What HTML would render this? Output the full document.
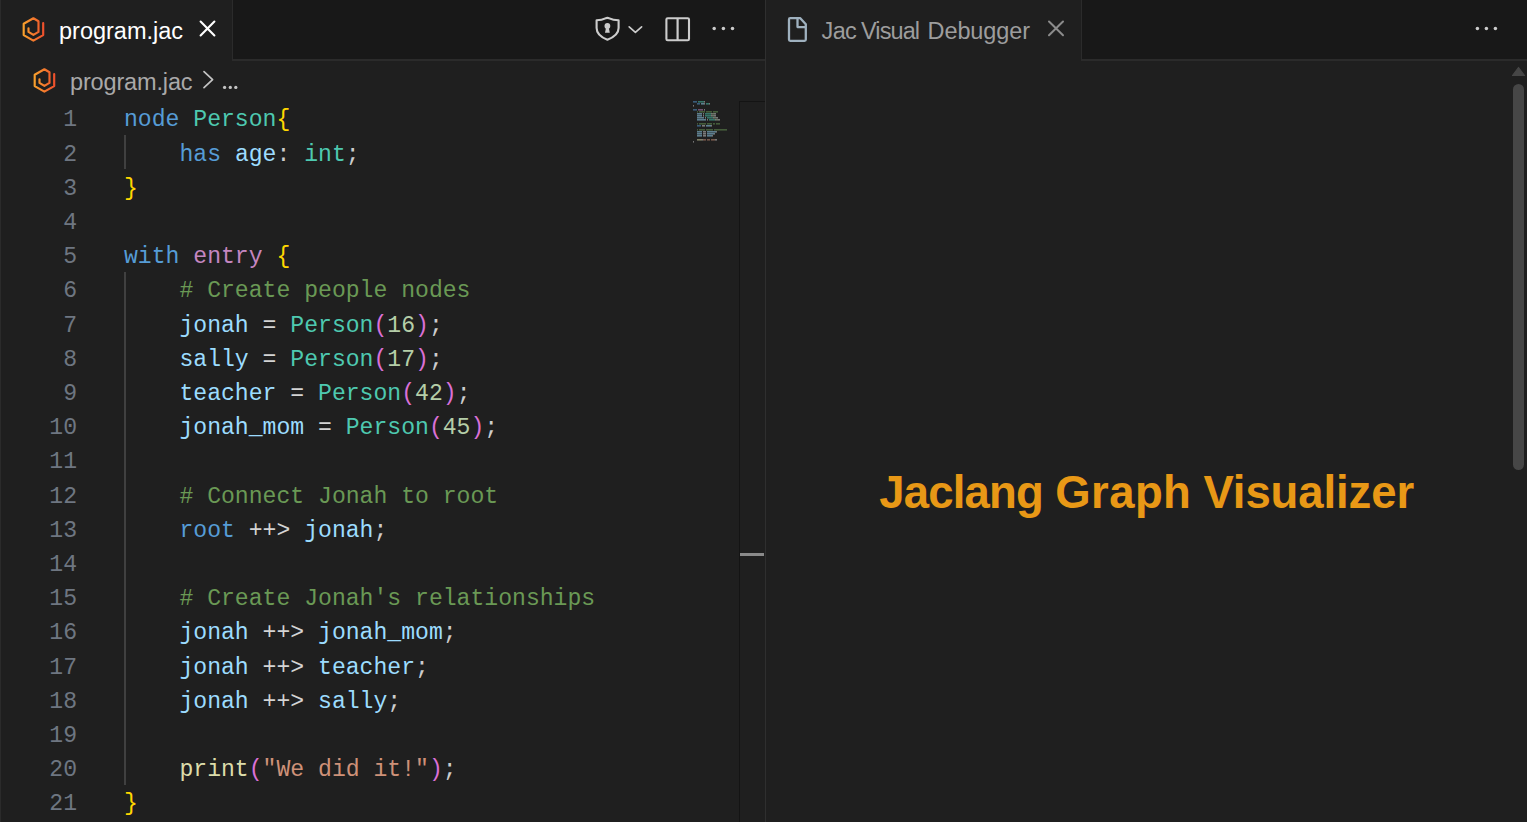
<!DOCTYPE html>
<html><head><meta charset="utf-8"><style>
*{margin:0;padding:0;box-sizing:border-box}
html,body{width:1527px;height:822px;overflow:hidden;background:#1f1f1f;font-family:"Liberation Sans",sans-serif}
.abs{position:absolute}
.tabt{position:absolute;font-size:23.5px;line-height:28px;white-space:nowrap}
.ln{position:absolute;left:0;width:77px;text-align:right;font-family:"Liberation Mono",monospace;font-size:23.1px;color:#6e7681;height:34.2px;line-height:34.2px}
.cl{position:absolute;left:124px;font-family:"Liberation Mono",monospace;font-size:23.1px;color:#cccccc;height:34.2px;line-height:34.2px;white-space:pre}
.k{color:#569cd6}.t{color:#4ec9b0}.v{color:#9cdcfe}.c{color:#6a9955}.s{color:#ce9178}.f{color:#dcdcaa}.n{color:#b5cea8}.b1{color:#ffd700}.b2{color:#da70d6}.ck{color:#c586c0}.o{color:#d4d4d4}
.ig{position:absolute;left:124px;width:2px;background:#404040}
.ttl{position:absolute;top:468px;font-weight:bold;font-size:45.5px;line-height:50px;color:#e89816;white-space:nowrap}
</style></head><body>
<div class="abs" style="left:0px;top:0px;width:1px;height:822px;background:#2b2b2b"></div>
<div class="abs" style="left:1px;top:0px;width:764px;height:59px;background:#181818"></div>
<div class="abs" style="left:1px;top:59px;width:764px;height:2px;background:#2b2b2b"></div>
<div class="abs" style="left:1px;top:0px;width:231px;height:61px;background:#1f1f1f"></div>
<div class="abs" style="left:232px;top:0px;width:1px;height:59px;background:#2b2b2b"></div>
<div class="abs" style="left:766px;top:0px;width:761px;height:59px;background:#181818"></div>
<div class="abs" style="left:766px;top:59px;width:761px;height:2px;background:#2b2b2b"></div>
<div class="abs" style="left:766px;top:0px;width:315px;height:61px;background:#1f1f1f"></div>
<div class="abs" style="left:1081px;top:0px;width:1px;height:59px;background:#2b2b2b"></div>
<div class="abs" style="left:765px;top:0px;width:1px;height:822px;background:#2f2f2f"></div>
<div class="abs" style="left:739px;top:101px;width:1px;height:721px;background:#141414"></div>
<div class="abs" style="left:740px;top:101px;width:25px;height:1px;background:#141414"></div>
<div class="abs" style="left:740px;top:553px;width:24px;height:3px;background:#8a8a8a"></div>
<svg class="abs" style="left:0px;top:0px" width="60" height="60" viewBox="0 0 60 60"><defs><linearGradient id="g1" x1="22" y1="0" x2="45" y2="0" gradientUnits="userSpaceOnUse"><stop offset="0" stop-color="#f9a52c"/><stop offset="0.5" stop-color="#f47a2d"/><stop offset="1" stop-color="#ee4a2c"/></linearGradient></defs><path d="M28.5,28.2 L28.5,31.9 L33.4,34.9 L38.5,31.9 L38.5,21.2 L33.4,18.3 L23.7,23.8 L23.7,35.1 L33.4,40.6 L43.2,35.1 L43.2,23" fill="none" stroke="url(#g1)" stroke-width="2.15" stroke-linecap="round" stroke-linejoin="round"/></svg>
<svg class="abs" style="left:11.4px;top:51px" width="60" height="60" viewBox="0 0 60 60"><defs><linearGradient id="g2" x1="22" y1="0" x2="45" y2="0" gradientUnits="userSpaceOnUse"><stop offset="0" stop-color="#f9a52c"/><stop offset="0.5" stop-color="#f47a2d"/><stop offset="1" stop-color="#ee4a2c"/></linearGradient></defs><path d="M28.5,28.2 L28.5,31.9 L33.4,34.9 L38.5,31.9 L38.5,21.2 L33.4,18.3 L23.7,23.8 L23.7,35.1 L33.4,40.6 L43.2,35.1 L43.2,23" fill="none" stroke="url(#g2)" stroke-width="2.15" stroke-linecap="round" stroke-linejoin="round"/></svg>
<div class="tabt" style="left:59px;top:17.2px;color:#ffffff">program.jac</div>
<svg class="abs" style="left:0;top:0" width="240" height="60"><path d="M200.6,21.6 L214.4,35.4 M214.4,21.6 L200.6,35.4" stroke="#ffffff" stroke-width="2.1" stroke-linecap="round"/></svg>
<div class="tabt" style="left:70px;top:67.8px;color:#a9a9a9;letter-spacing:-0.15px">program.jac</div>
<svg class="abs" style="left:0;top:60px" width="260" height="40"><path d="M204,11.6 L212.6,19.6 L204,27.6" fill="none" stroke="#c4c4c4" stroke-width="1.7" stroke-linecap="round" stroke-linejoin="round"/><circle cx="224.6" cy="27.4" r="1.65" fill="#c4c4c4"/><circle cx="230.3" cy="27.4" r="1.65" fill="#c4c4c4"/><circle cx="235.8" cy="27.4" r="1.65" fill="#c4c4c4"/></svg>
<svg class="abs" style="left:580px;top:0" width="180" height="60" viewBox="580 0 180 60"><path d="M596.6,20.3 Q602,20.3 605.4,18.4 Q607.4,17.3 609.4,18.4 Q612.8,20.3 618.6,20.3 L618.6,28 C618.6,33.5 613.5,37.4 607.4,39.7 C601.3,37.4 596.6,33.5 596.6,28 Z" fill="none" stroke="#cccccc" stroke-width="2.1" stroke-linejoin="round"/><circle cx="607.4" cy="25.9" r="2.9" fill="#cccccc"/><path d="M606.1,27.5 L608.7,27.5 L609.8,32.8 L605,32.8 Z" fill="#cccccc"/><path d="M629.2,26.9 L635.4,32.4 L641.6,26.9" fill="none" stroke="#cccccc" stroke-width="1.7" stroke-linecap="round" stroke-linejoin="round"/><rect x="666.4" y="18.2" width="22.6" height="22" rx="1.3" fill="none" stroke="#cccccc" stroke-width="2.1"/><path d="M677.6,18.2 L677.6,40.2" stroke="#cccccc" stroke-width="2.2"/><circle cx="714.2" cy="28.6" r="1.75" fill="#cccccc"/><circle cx="723.4" cy="28.6" r="1.75" fill="#cccccc"/><circle cx="732.5" cy="28.6" r="1.75" fill="#cccccc"/></svg>
<svg class="abs" style="left:780px;top:0" width="60" height="60" viewBox="780 0 60 60"><path d="M800.3,18.2 L790.2,18.2 Q789,18.2 789,19.4 L789,39.6 Q789,40.8 790.2,40.8 L804.6,40.8 Q805.8,40.8 805.8,39.6 L805.8,24.2 Z" fill="none" stroke="#9fb1bf" stroke-width="2.3" stroke-linejoin="round"/><path d="M797.5,18.2 L797.5,27.1 L805.8,27.1" fill="none" stroke="#9fb1bf" stroke-width="2.3" stroke-linejoin="round"/></svg>
<div class="tabt" style="left:821.5px;top:17.2px;color:#9d9d9d;letter-spacing:-0.6px">Jac</div>
<div class="tabt" style="left:861px;top:17.2px;color:#9d9d9d;letter-spacing:-0.9px">Visual</div>
<div class="tabt" style="left:927.6px;top:17.2px;color:#9d9d9d;letter-spacing:-0.12px">Debugger</div>
<svg class="abs" style="left:1030px;top:0" width="60" height="60" viewBox="1030 0 60 60"><path d="M1049,21.5 L1063,35.2 M1063,21.5 L1049,35.2" stroke="#8b8b8b" stroke-width="2" stroke-linecap="round"/></svg>
<svg class="abs" style="left:1460px;top:0" width="60" height="60" viewBox="1460 0 60 60"><circle cx="1477.4" cy="28.5" r="1.75" fill="#cccccc"/><circle cx="1486.4" cy="28.5" r="1.75" fill="#cccccc"/><circle cx="1495.4" cy="28.5" r="1.75" fill="#cccccc"/></svg>
<svg class="abs" style="left:1500px;top:60px" width="27" height="420" viewBox="1500 60 27 420"><path d="M1518.5,67.5 L1524.5,75.5 L1512.5,75.5 Z" fill="#464646" stroke="#464646" stroke-width="1.2" stroke-linejoin="round"/><rect x="1513" y="84" width="11" height="386" rx="5.5" fill="#464646"/></svg>
<svg class="abs" style="left:0;top:0" width="760" height="160" opacity="0.5"><rect x="693" y="101" width="4" height="1.6" fill="#569cd6"/><rect x="698" y="101" width="6" height="1.6" fill="#4ec9b0"/><rect x="704" y="101" width="1" height="1.6" fill="#cccccc"/><rect x="697" y="103" width="3" height="1.6" fill="#569cd6"/><rect x="701" y="103" width="3" height="1.6" fill="#9cdcfe"/><rect x="704" y="103" width="1" height="1.6" fill="#cccccc"/><rect x="706" y="103" width="3" height="1.6" fill="#4ec9b0"/><rect x="709" y="103" width="1" height="1.6" fill="#cccccc"/><rect x="693" y="105" width="1" height="1.6" fill="#cccccc"/><rect x="693" y="109" width="4" height="1.6" fill="#569cd6"/><rect x="698" y="109" width="5" height="1.6" fill="#c586c0"/><rect x="704" y="109" width="1" height="1.6" fill="#cccccc"/><rect x="697" y="111" width="1" height="1.6" fill="#6a9955"/><rect x="699" y="111" width="6" height="1.6" fill="#6a9955"/><rect x="706" y="111" width="6" height="1.6" fill="#6a9955"/><rect x="713" y="111" width="5" height="1.6" fill="#6a9955"/><rect x="697" y="113" width="5" height="1.6" fill="#9cdcfe"/><rect x="703" y="113" width="1" height="1.6" fill="#d4d4d4"/><rect x="705" y="113" width="6" height="1.6" fill="#4ec9b0"/><rect x="711" y="113" width="1" height="1.6" fill="#cccccc"/><rect x="712" y="113" width="2" height="1.6" fill="#b5cea8"/><rect x="714" y="113" width="1" height="1.6" fill="#cccccc"/><rect x="715" y="113" width="1" height="1.6" fill="#cccccc"/><rect x="697" y="115" width="5" height="1.6" fill="#9cdcfe"/><rect x="703" y="115" width="1" height="1.6" fill="#d4d4d4"/><rect x="705" y="115" width="6" height="1.6" fill="#4ec9b0"/><rect x="711" y="115" width="1" height="1.6" fill="#cccccc"/><rect x="712" y="115" width="2" height="1.6" fill="#b5cea8"/><rect x="714" y="115" width="1" height="1.6" fill="#cccccc"/><rect x="715" y="115" width="1" height="1.6" fill="#cccccc"/><rect x="697" y="117" width="7" height="1.6" fill="#9cdcfe"/><rect x="705" y="117" width="1" height="1.6" fill="#d4d4d4"/><rect x="707" y="117" width="6" height="1.6" fill="#4ec9b0"/><rect x="713" y="117" width="1" height="1.6" fill="#cccccc"/><rect x="714" y="117" width="2" height="1.6" fill="#b5cea8"/><rect x="716" y="117" width="1" height="1.6" fill="#cccccc"/><rect x="717" y="117" width="1" height="1.6" fill="#cccccc"/><rect x="697" y="119" width="9" height="1.6" fill="#9cdcfe"/><rect x="707" y="119" width="1" height="1.6" fill="#d4d4d4"/><rect x="709" y="119" width="6" height="1.6" fill="#4ec9b0"/><rect x="715" y="119" width="1" height="1.6" fill="#cccccc"/><rect x="716" y="119" width="2" height="1.6" fill="#b5cea8"/><rect x="718" y="119" width="1" height="1.6" fill="#cccccc"/><rect x="719" y="119" width="1" height="1.6" fill="#cccccc"/><rect x="697" y="123" width="1" height="1.6" fill="#6a9955"/><rect x="699" y="123" width="7" height="1.6" fill="#6a9955"/><rect x="707" y="123" width="5" height="1.6" fill="#6a9955"/><rect x="713" y="123" width="2" height="1.6" fill="#6a9955"/><rect x="716" y="123" width="4" height="1.6" fill="#6a9955"/><rect x="697" y="125" width="4" height="1.6" fill="#569cd6"/><rect x="702" y="125" width="3" height="1.6" fill="#d4d4d4"/><rect x="706" y="125" width="5" height="1.6" fill="#9cdcfe"/><rect x="711" y="125" width="1" height="1.6" fill="#cccccc"/><rect x="697" y="129" width="1" height="1.6" fill="#6a9955"/><rect x="699" y="129" width="6" height="1.6" fill="#6a9955"/><rect x="706" y="129" width="7" height="1.6" fill="#6a9955"/><rect x="714" y="129" width="13" height="1.6" fill="#6a9955"/><rect x="697" y="131" width="5" height="1.6" fill="#9cdcfe"/><rect x="703" y="131" width="3" height="1.6" fill="#d4d4d4"/><rect x="707" y="131" width="9" height="1.6" fill="#9cdcfe"/><rect x="716" y="131" width="1" height="1.6" fill="#cccccc"/><rect x="697" y="133" width="5" height="1.6" fill="#9cdcfe"/><rect x="703" y="133" width="3" height="1.6" fill="#d4d4d4"/><rect x="707" y="133" width="7" height="1.6" fill="#9cdcfe"/><rect x="714" y="133" width="1" height="1.6" fill="#cccccc"/><rect x="697" y="135" width="5" height="1.6" fill="#9cdcfe"/><rect x="703" y="135" width="3" height="1.6" fill="#d4d4d4"/><rect x="707" y="135" width="5" height="1.6" fill="#9cdcfe"/><rect x="712" y="135" width="1" height="1.6" fill="#cccccc"/><rect x="697" y="139" width="5" height="1.6" fill="#dcdcaa"/><rect x="702" y="139" width="1" height="1.6" fill="#cccccc"/><rect x="703" y="139" width="3" height="1.6" fill="#ce9178"/><rect x="707" y="139" width="3" height="1.6" fill="#ce9178"/><rect x="711" y="139" width="4" height="1.6" fill="#ce9178"/><rect x="715" y="139" width="1" height="1.6" fill="#cccccc"/><rect x="716" y="139" width="1" height="1.6" fill="#cccccc"/><rect x="693" y="141" width="1" height="1.6" fill="#cccccc"/></svg>
<div class="abs" style="left:0;top:0"><div class="ig" style="top:134.7px;height:34.4px"></div><div class="ig" style="top:271.7px;height:513.3px"></div><div class="ln" style="top:103.3px">1</div><div class="cl" style="top:103.3px"><span class="k">node</span> <span class="t">Person</span><span class="b1">{</span></div><div class="ln" style="top:137.5px">2</div><div class="cl" style="top:137.5px">    <span class="k">has</span> <span class="v">age</span>: <span class="t">int</span>;</div><div class="ln" style="top:171.7px">3</div><div class="cl" style="top:171.7px"><span class="b1">}</span></div><div class="ln" style="top:205.9px">4</div><div class="ln" style="top:240.1px">5</div><div class="cl" style="top:240.1px"><span class="k">with</span> <span class="ck">entry</span> <span class="b1">{</span></div><div class="ln" style="top:274.3px">6</div><div class="cl" style="top:274.3px">    <span class="c"># Create people nodes</span></div><div class="ln" style="top:308.5px">7</div><div class="cl" style="top:308.5px">    <span class="v">jonah</span> <span class="o">=</span> <span class="t">Person</span><span class="b2">(</span><span class="n">16</span><span class="b2">)</span>;</div><div class="ln" style="top:342.7px">8</div><div class="cl" style="top:342.7px">    <span class="v">sally</span> <span class="o">=</span> <span class="t">Person</span><span class="b2">(</span><span class="n">17</span><span class="b2">)</span>;</div><div class="ln" style="top:376.9px">9</div><div class="cl" style="top:376.9px">    <span class="v">teacher</span> <span class="o">=</span> <span class="t">Person</span><span class="b2">(</span><span class="n">42</span><span class="b2">)</span>;</div><div class="ln" style="top:411.1px">10</div><div class="cl" style="top:411.1px">    <span class="v">jonah_mom</span> <span class="o">=</span> <span class="t">Person</span><span class="b2">(</span><span class="n">45</span><span class="b2">)</span>;</div><div class="ln" style="top:445.3px">11</div><div class="ln" style="top:479.5px">12</div><div class="cl" style="top:479.5px">    <span class="c"># Connect Jonah to root</span></div><div class="ln" style="top:513.7px">13</div><div class="cl" style="top:513.7px">    <span class="k">root</span> <span class="o">++&gt;</span> <span class="v">jonah</span>;</div><div class="ln" style="top:547.9px">14</div><div class="ln" style="top:582.1px">15</div><div class="cl" style="top:582.1px">    <span class="c"># Create Jonah&#x27;s relationships</span></div><div class="ln" style="top:616.3px">16</div><div class="cl" style="top:616.3px">    <span class="v">jonah</span> <span class="o">++&gt;</span> <span class="v">jonah_mom</span>;</div><div class="ln" style="top:650.5px">17</div><div class="cl" style="top:650.5px">    <span class="v">jonah</span> <span class="o">++&gt;</span> <span class="v">teacher</span>;</div><div class="ln" style="top:684.7px">18</div><div class="cl" style="top:684.7px">    <span class="v">jonah</span> <span class="o">++&gt;</span> <span class="v">sally</span>;</div><div class="ln" style="top:718.9px">19</div><div class="ln" style="top:753.1px">20</div><div class="cl" style="top:753.1px">    <span class="f">print</span><span class="b2">(</span><span class="s">&quot;We did it!&quot;</span><span class="b2">)</span>;</div><div class="ln" style="top:787.3px">21</div><div class="cl" style="top:787.3px"><span class="b1">}</span></div></div>
<div class="ttl" style="left:879.3px;letter-spacing:-0.83px">Jaclang</div>
<div class="ttl" style="left:1055.3px;letter-spacing:0.4px">Graph</div>
<div class="ttl" style="left:1203.4px;letter-spacing:-0.09px">Visualizer</div>
</body></html>
